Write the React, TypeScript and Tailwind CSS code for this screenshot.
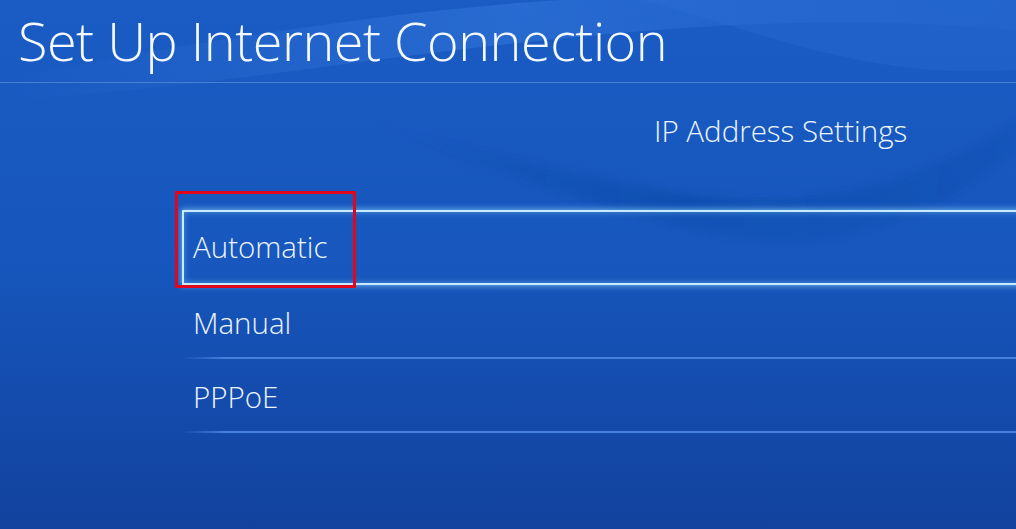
import React from 'react';

// Fondo con ondas estilo PS4
const Waves: React.FC = () => (
  <svg className="absolute inset-0 w-full h-full pointer-events-none" viewBox="0 0 1016 529" preserveAspectRatio="none">
    <defs>
      <linearGradient id="w1" x1="0" y1="0" x2="1" y2="0">
        <stop offset="0" stopColor="#3a7be0" stopOpacity="0.0" />
        <stop offset="0.5" stopColor="#3c80e4" stopOpacity="0.4" />
        <stop offset="1" stopColor="#2a6cd4" stopOpacity="0.2" />
      </linearGradient>
      <linearGradient id="w2" x1="0" y1="0" x2="1" y2="0">
        <stop offset="0" stopColor="#0f3f9c" stopOpacity="0" />
        <stop offset="0.5" stopColor="#0f3f9c" stopOpacity="0.35" />
        <stop offset="1" stopColor="#0f3f9c" stopOpacity="0.15" />
      </linearGradient>
      <filter id="blur"><feGaussianBlur stdDeviation="4" /></filter>
    </defs>
    <path d="M0 80 C 200 40, 400 10, 560 0 L 1016 0 L 1016 30 C 800 10, 600 30, 300 70 C 180 86, 80 96, 0 100 Z" fill="url(#w1)" />
    <path filter="url(#blur)" d="M360 120 C 500 170, 640 230, 760 240 C 870 248, 950 205, 1016 150 L 1016 120 C 940 170, 860 200, 760 200 C 620 195, 500 150, 360 120 Z" fill="url(#w2)" />
    <path d="M640 0 C 760 30, 860 80, 1016 70 L 1016 0 Z" fill="#2f72d6" fillOpacity="0.3" />
  </svg>
);

const options = ['Automatic', 'Manual', 'PPPoE'];

export default function App() {
  return (
    <div
      className="relative w-[1016px] h-[529px] overflow-hidden bg-gradient-to-b from-[#1a5cc4] via-[#1656bc] to-[#12429e] text-white"
      style={{ fontFamily: '"Open Sans", "Noto Sans", sans-serif' }}
    >
      <Waves />

      <div className="relative flex flex-col">
        {/* Título */}
        <div className="h-[83px] pl-[18px] flex items-end border-b border-[#5a90dc]/70">
          <h1 className="text-[54px] font-light leading-none pb-[15px] tracking-[-0.5px] text-[#f4f8ff]">
            Set Up Internet Connection
          </h1>
        </div>

        {/* Subtítulo */}
        <div className="h-[127px] pl-[654px] pt-[33px]">
          <p className="text-[29.5px] font-light leading-none text-[#eef4ff]">IP Address Settings</p>
        </div>

        {/* Lista */}
        <div className="ml-[182px] mr-[-20px] flex flex-col">
          {options.map((opt, i) =>
            i === 0 ? (
              <div key={opt} className="relative h-[75px] flex items-center pl-[9px] border-y-2 border-l-2 border-[#c8ecff] bg-[#1a5ac0]/40 shadow-[0_0_6px_1px_rgba(140,210,255,0.7),inset_0_0_6px_rgba(140,210,255,0.5)]">
                <span className="text-[29.5px] font-light leading-none text-[#eef4ff] pb-[2px]">{opt}</span>
              </div>
            ) : (
              <div key={opt} className="relative h-[74px] flex items-center pl-[11px]">
                <span className="text-[29.5px] font-light leading-none text-[#eef4ff] pt-[2px]">{opt}</span>
                <div className="absolute left-0 right-0 bottom-0 h-[2px] bg-gradient-to-r from-[#4b86e0]/0 via-[#4b86e0]/90 via-[5%] to-[#4b86e0]/90" />
              </div>
            )
          )}
        </div>
      </div>

      {/* Marco rojo de anotación */}
      <div className="absolute left-[175px] top-[191px] w-[181px] h-[97px] border-[3px] border-[#e2061c]" />
    </div>
  );
}
